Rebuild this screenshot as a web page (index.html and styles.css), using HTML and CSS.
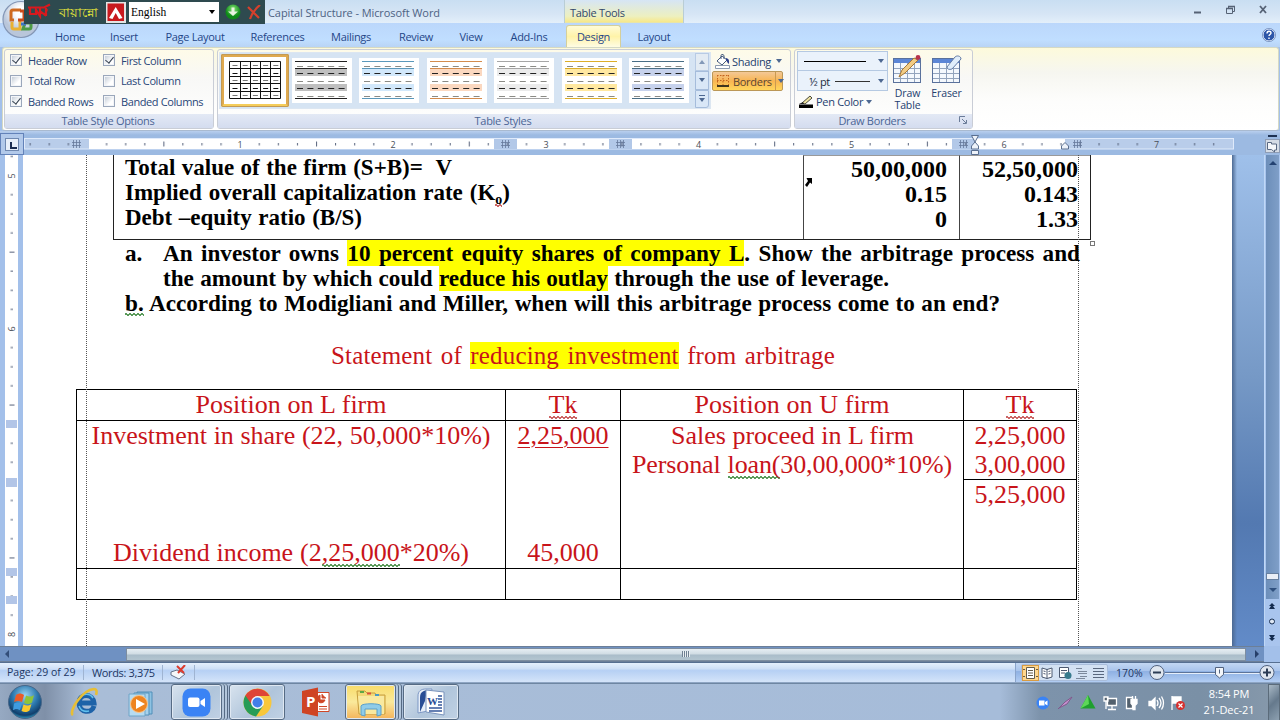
FILE: index.html
```html
<!DOCTYPE html>
<html lang="en">
<head>
<meta charset="utf-8">
<title>Capital Structure - Microsoft Word</title>
<link rel="stylesheet" href="styles.css">
</head>
<body>
<svg width="0" height="0" class="defs">
  <defs>
    <g id="dashes" fill="none" stroke-width="1.2" stroke-dasharray="6 4.4">
      <path d="M5 8.500H56M5 23.500H56M5 38.500H56" stroke="#8b8b86"/>
      <path d="M5 15.500H56M5 30.500H56" stroke="#222"/>
    </g>
    <radialGradient id="orb" cx=".5" cy=".3" r=".75"><stop offset="0" stop-color="#9ad4f2"/><stop offset=".5" stop-color="#2b78ae"/><stop offset=".8" stop-color="#123f6c"/><stop offset="1" stop-color="#38c5e8"/></radialGradient>
    <radialGradient id="office" cy=".3"><stop offset=".3" stop-color="#fff"/><stop offset="1" stop-color="#b9c6da"/></radialGradient>
    <radialGradient id="green" cy=".3"><stop offset="0" stop-color="#8be67a"/><stop offset="1" stop-color="#0d8b17"/></radialGradient>
    <g id="word-grid">
      <rect x=".5" y=".5" width="27" height="24" fill="#f4f8fd" stroke="#5a719c"/>
      <path d="M1 1h26v4H1z" fill="#5c86d6"/>
      <path d="M1 10.500h26M1 15.500h26M1 20.500h26M7.500 5v19M14.500 5v19M21.500 5v19" stroke="#93a4bd"/>
    </g>
    <g id="gridmark" stroke="#66799a"><path d="M1.500 0v8M4.500 0v8M7.500 0v8M0 2.500h9M0 5.500h9" stroke-width=".8"/></g>
  </defs>
</svg>
<div class="screen">
  <header class="titlebar">
    <svg class="orb" width="42" height="40" viewBox="0 0 42 40"><circle cx="20" cy="19.500" r="18" fill="url(#office)" stroke="#8497b6" stroke-width="1.200"/><g fill="none" stroke-width="3"><path d="M13 20h-3v-8q0-2 2-2h8" stroke="#cf6a20"/><path d="M11 22v5q0 2 2 2h6v-8" stroke="#e9b132"/><path d="M19 11h4v9h-6" stroke="#cc4b1c"/><path d="M22 29h6q2 0 2-2v-4h-6z" stroke="#4e9b45"/><path d="M20 24h5" stroke="#3f74c4"/></g></svg>
    <div class="bijoy">
      <svg class="scribble" width="26" height="18" viewBox="0 0 26 18" fill="none" stroke="#d8191e" stroke-width="2.200"><path d="M2 5.500h16l6-3M4 6v6h6V8l4 6V6M14 9l5 4 2-6M20 6v8"/></svg>
      <span class="bangla" lang="bn">বায়ান্নো</span>
      <svg width="20" height="21" viewBox="0 0 20 21"><rect x=".5" y=".5" width="18.500" height="19.500" fill="#c8191e" stroke="#e4e4e4" stroke-width="2"/><path d="M3 16L9.700 5 16.500 16l-3.500 1-3.300-6L6.500 17z" fill="#fff"/></svg>
      <div class="langbox"><span>English</span><i class="tri"></i></div>
      <svg class="go" width="16" height="16" viewBox="0 0 16 16"><circle cx="8" cy="8" r="7.500" fill="url(#green)"/><path d="M6.500 3.500h3v4H13L8 12 3 7.500h3.500z" fill="#e8f5df"/></svg>
      <svg width="14" height="15" viewBox="0 0 14 15" fill="none" stroke="#d6402c" stroke-width="2.200"><path d="M1 2l11 11M13 0C8 4 5 8 3 14"/></svg>
    </div>
    <span class="doc-name">Capital Structure - Microsoft Word</span>
    <div class="tools-title"><span>Table Tools</span></div>
    <svg class="winbtns" width="80" height="14" viewBox="0 0 80 14" fill="none" stroke="#566275"><path d="M2 9.500h7" stroke-width="2"/><path d="M34.500 5.500h6v5h-6zM36.500 5V3.500h6v5H41" /><path d="M34 5.500h7M36 3.500h7" stroke-width="1.400"/><path d="M68 3l6 7M74 3l-6 7" stroke-width="1.800"/></svg>
  </header>
  <nav class="tabs">
    <span class="w54">Home</span><span class="w54">Insert</span><span class="w88">Page Layout</span><span class="w77">References</span><span class="w70">Mailings</span><span class="w60">Review</span><span class="w50">View</span><span class="w66">Add-Ins</span><span class="active">Design</span><span class="w66">Layout</span>
    <svg class="help" width="14" height="14" viewBox="0 0 14 14"><circle cx="7" cy="7" r="6" fill="#2c56a8" stroke="#e8f0fc"/><circle cx="7" cy="7" r="6.600" fill="none" stroke="#6480b0" stroke-width=".7"/><path d="M5 5.500c0-3 4-3 4-.5C9 6.500 7 6.500 7 8M7 9.500v1.500" fill="none" stroke="#fff" stroke-width="1.400"/></svg>
  </nav>
  <section class="ribbon">
    <div class="group options">
      <div class="checks">
        <label class="on"><i></i>Header Row</label><label class="on"><i></i>First Column</label>
        <label><i></i>Total Row</label><label><i></i>Last Column</label>
        <label class="on"><i></i>Banded Rows</label><label><i></i>Banded Columns</label>
      </div>
      <div class="glabel">Table Style Options</div>
    </div>
    <div class="group styles">
      <div class="styles-body">
        <div class="gallery">
          <div class="chosen"><svg width="60" height="45" viewBox="0 0 60 45"><path d="M4.500 3.500h51v37h-51zM4 10.500h52M4 18.500h52M4 25.500h52M4 33.500h52M15.500 3v38M25.500 3v38M35.500 3v38M45.500 3v38" fill="none" stroke="#111"/><path d="M7.500 7.500H56M7.500 22.500H56M7.500 37.500H56" stroke="#777" stroke-dasharray="5 5.200"/><path d="M7.500 15.500H56M7.500 30.500H56" stroke="#111" stroke-dasharray="5 5.200"/></svg></div>
          <svg class="thumb k" viewBox="0 0 60 45"><path class="band" d="M3 11h52v7H3zM3 26h52v7H3z"/><path class="rule" d="M3 3.500h52M3 10.500h52M3 40.500h52"/><use href="#dashes"/></svg>
          <svg class="thumb b" viewBox="0 0 60 45"><path class="band" d="M3 11h52v7H3zM3 26h52v7H3z"/><path class="rule" d="M3 3.500h52M3 10.500h52M3 40.500h52"/><use href="#dashes"/></svg>
          <svg class="thumb o" viewBox="0 0 60 45"><path class="band" d="M3 11h52v7H3zM3 26h52v7H3z"/><path class="rule" d="M3 3.500h52M3 10.500h52M3 40.500h52"/><use href="#dashes"/></svg>
          <svg class="thumb g" viewBox="0 0 60 45"><path class="band" d="M3 11h52v7H3zM3 26h52v7H3z"/><path class="rule" d="M3 3.500h52M3 10.500h52M3 40.500h52"/><use href="#dashes"/></svg>
          <svg class="thumb y" viewBox="0 0 60 45"><path class="band" d="M3 11h52v7H3zM3 26h52v7H3z"/><path class="rule" d="M3 3.500h52M3 10.500h52M3 40.500h52"/><use href="#dashes"/></svg>
          <svg class="thumb n" viewBox="0 0 60 45"><path class="band" d="M3 11h52v7H3zM3 26h52v7H3z"/><path class="rule" d="M3 3.500h52M3 10.500h52M3 40.500h52"/><use href="#dashes"/></svg>
          <div class="scrollers"><b class="dim"><i class="up"></i></b><b><i class="dn"></i></b><b class="more"><i class="bar"></i><i class="dn"></i></b></div>
        </div>
        <div class="fills">
          <div class="shade"><svg width="16" height="15" viewBox="0 0 16 15"><path d="M2 7l5-5 5 4-5 5z" fill="#fff" stroke="#44597c"/><path d="M6 5V1.500C6 0 9 0 9 2v3" fill="none" stroke="#44597c"/><path d="M11 4c4 1 3 4 3 6-2-1-2-3-3-4z" fill="#2c3f8b"/><path d="M.5 11.500h14v3H.5z" fill="#fff" stroke="#8d9bb0"/></svg><span>Shading</span><i class="dn"></i></div>
          <div class="bord"><svg width="14" height="14" viewBox="0 0 14 14" fill="none"><path d="M1.500 1v10M7 1v10M12.500 1v10M1 1.500h12M1 6.500h12" stroke="#c4641e" stroke-dasharray="1.500 1.500"/><path d="M1 12h12" stroke="#111" stroke-width="1.600"/></svg><span>Borders</span><b><i class="dn"></i></b></div>
        </div>
      </div>
      <div class="glabel">Table Styles</div>
    </div>
    <div class="group draw">
      <div class="draw-body">
        <div class="pens">
          <div class="pick"><u class="long"></u><i class="dn"></i></div>
          <div class="pick second"><span>½ pt</span><u></u><i class="dn"></i></div>
          <div class="pencolor"><svg width="16" height="14" viewBox="0 0 16 14"><path d="M1 9.500h14V13H1z" fill="#000"/><path d="M4 8L12 1l2 2-7 6z" fill="#efe3a0" stroke="#4c4c40"/><path d="M1 9l4-2 1 2z" fill="#222"/></svg><span>Pen Color</span><i class="dn"></i></div>
        </div>
        <div class="tool"><svg width="31" height="30" viewBox="0 0 31 30"><use href="#word-grid" x="1" y="4"/><path d="M7 23l3-7L22 4l4 2-13 13z" fill="#f2cc85" stroke="#a77835"/><circle cx="26" cy="3.500" r="2.400" fill="#b8344b"/></svg><span>Draw<br>Table</span></div>
        <div class="tool"><svg width="31" height="30" viewBox="0 0 31 30"><use href="#word-grid" x="1" y="4"/><path d="M16 13L24 3c2-2 6-1 6 2l-9 10c-3 1-5 0-5-2z" fill="#e0edfa" stroke="#647ca5"/></svg><span>Eraser</span></div>
      </div>
      <div class="glabel shift">Draw Borders<svg class="launch" width="8" height="8" viewBox="0 0 8 8" fill="none" stroke="#6b7c99"><path d="M.5 6V.5H6M3 3l4 4M7.500 4v3.500H4"/></svg></div>
    </div>
  </section>

  <div class="hruler">
    <div class="tabstop"><span></span></div>
    <svg width="1256" height="22" viewBox="24 133 1256 22">
      <defs><pattern id="ht" x="87.500" y="139" width="152.700" height="10" patternUnits="userSpaceOnUse"><path d="M19.100 4v2.500M38.200 4v2.500M57.300 4v2.500M76.400 2.500v5M95.400 4v2.500M114.500 4v2.500M133.600 4v2.500" stroke="#55617a" stroke-width="1"/></pattern></defs>
      <rect x="24.500" y="138.500" width="1209" height="10.500" fill="#b9cdea" stroke="#dfeafb"/>
      <rect x="89" y="139" width="976" height="10" fill="#fff"/>
      <path d="M494 139h23v10h-23zM609 139h23v10h-23zM952 139h23v10h-23z" fill="#b2c8e8"/>
      <rect x="24" y="139" width="1205" height="10" fill="url(#ht)"/>
      <use href="#gridmark" x="72" y="140"/><use href="#gridmark" x="501" y="140"/><use href="#gridmark" x="616" y="140"/><use href="#gridmark" x="959" y="140"/><use href="#gridmark" x="1073" y="140"/>
      <g class="rnum"><text x="240" y="147.500">1</text><text x="393" y="147.500">2</text><text x="546" y="147.500">3</text><text x="698.500" y="147.500">4</text><text x="851.500" y="147.500">5</text><text x="1004" y="147.500">6</text><text x="1156.500" y="147.500">7</text></g>
      <g fill="#eef3fa" stroke="#5a6f90"><path d="M971.500 135.500h7l-3.500 6.500zM971.500 149v-3l3.500-4 3.500 4v3zM971.500 150.500h7v4h-7zM1061.500 149v-3l3.500-3.500 3.500 3.500v3z"/></g>
      <path d="M1268 136h9" stroke="#1d3152" stroke-width="2"/><rect x="1265.500" y="139.500" width="14" height="13" fill="#d5dce6" stroke="#8e9db5"/><path d="M1267.500 142.500h4v1.500h5v6h-2v2l-3-2.500h-4z" fill="#f5f7fa" stroke="#596982"/>
    </svg>
  </div>

  <main class="work">
    <svg class="vruler" width="23" height="491" viewBox="0 155 23 491">
      <defs><pattern id="vt" x="5" y="175.700" width="13" height="152.900" patternUnits="userSpaceOnUse"><path d="M5.500 19.100h2.500M5.500 38.200h2.500M5.500 57.300h2.500M4.500 76.400h5M5.500 95.500h2.500M5.500 114.600h2.500M5.500 133.700h2.500" stroke="#55617a"/></pattern></defs>
      <rect x="0" y="155" width="23" height="491" fill="#a3c0ea"/><rect x="5" y="155" width="13" height="491" fill="#fff"/>
      <rect x="5" y="155" width="13" height="491" fill="url(#vt)"/>
      <path d="M6 420h11v8H6zM6 478h11v9H6zM6 568h11v8H6zM6 596h11v8H6z" fill="#b2c5e7"/>
      <g class="rnum"><text transform="translate(14.500 176)rotate(-90)">5</text><text transform="translate(14.500 329)rotate(-90)">6</text><text transform="translate(14.500 634.500)rotate(-90)">8</text></g>
    </svg>
    <article class="page">
      <div class="guide left"></div><div class="guide right"></div>
      <div class="ratios">
        <div class="names"><p class="fit n1">Total value of the firm (S+B)=&nbsp; V</p><p class="fit n2">Implied overall capitalization rate (K<sub class="wr">o</sub>)</p><p class="fit n3">Debt –equity ratio (B/S)</p></div>
        <div class="vals"><p>50,00,000</p><p>0.15</p><p>0</p></div>
        <div class="vals last"><p>52,50,000</p><p>0.143</p><p>1.33</p></div>
        <i class="handle"></i>
      </div>
      <svg class="cursor" width="8" height="9" viewBox="0 0 8 9"><path d="M1.500 0H7v6L5 4.500 2 9 0 7l3-4z"/></svg>
      <div class="questions">
        <div class="q"><span class="let">a.</span><p class="fit q1">An investor owns <mark>10 percent equity shares of company L</mark>. Show the arbitrage process and</p></div>
        <div class="q"><span class="let"></span><p class="fit q2">the amount by which could <mark>reduce his outlay</mark> through the use of leverage.</p></div>
        <div class="q"><p class="fit q3"><span class="wg">b.</span> According to Modigliani and Miller, when will this arbitrage process come to an end?</p></div>
      </div>
      <h2 class="fit">Statement of <mark>reducing investment</mark> from arbitrage</h2>
      <div class="ledger">
        <div class="hd"><p class="fit l1">Position on L firm</p></div><div class="hd"><p><span class="wr">Tk</span></p></div><div class="hd"><p class="fit l4">Position on U firm</p></div><div class="hd"><p><span class="wr">Tk</span></p></div>
        <div class="bd"><p class="fit l2">Investment in share (22, 50,000*10%)</p><p class="fit l3">Dividend income (2<span class="wg">,25,000</span>*20%)</p></div>
        <div class="bd"><p><u>2,25,000</u></p><p>45,000</p></div>
        <div class="bd two"><p class="fit l5">Sales proceed in L firm</p><p class="fit l6">Personal <span class="wg">loan(</span>30,00,000*10%)</p></div>
        <div class="bd two tot"><p>2,25,000</p><p class="line">3,00,000</p><p>5,25,000</p></div>
        <div></div><div></div><div></div><div></div>
      </div>
    </article>
    <div class="desk"></div>
    <div class="vscroll">
      <div class="track"><i class="up"></i><b></b><i class="dn"></i></div>
      <svg width="15" height="46" viewBox="0 0 15 46" fill="#142c50"><path d="M7 4l3 3H8l2 3H4l2-3H4zM7 42l3-3H8l2-3H4l2 3H4z"/><circle cx="7" cy="22.500" r="2.500" fill="#dfe8f4" stroke="#142c50"/></svg>
    </div>
  </main>
  <div class="hscroll"><i class="lt"></i><div class="thumbbar"><span></span></div><i class="rt"></i></div>

  <footer class="status">
    <span class="pg">Page: 29 of 29</span><span class="wd">Words: 3,375</span>
    <span class="pf"><svg width="18" height="15" viewBox="0 0 18 15"><path d="M1 7l6-2 8 4-6 5-8-4z" fill="#f5f7fa" stroke="#65738a"/><path d="M7 1l7 7M15 0L8 8" stroke="#dc3a2d" stroke-width="2"/></svg></span>
    <div class="status-right">
      <div class="views">
        <svg class="cur" width="17" height="16" viewBox="0 0 17 16"><path d="M4.500 2.500h8v11h-8z" fill="#fff" stroke="#665d4a"/><path d="M6 5.500h5M6 8h5M6 10.500h5M1 4.500h2M1 11.500h2M14 4.500h2M14 11.500h2" stroke="#665d4a"/></svg>
        <svg width="17" height="16" viewBox="0 0 17 16"><path d="M3 3l5 1.500L13 3v9l-5 1.500L3 12zM8 4v9.500" fill="#fff" stroke="#4b5870"/><path d="M4.500 6l2 .5M4.500 8.500l2 .5M9.500 6.500l2-.5M9.500 9l2-.5" stroke="#4b5870"/></svg>
        <svg width="17" height="16" viewBox="0 0 17 16"><path d="M3.500 2.500h9v10h-9z" fill="#fff" stroke="#4b5870"/><path d="M5 5.500h6M5 8h4" stroke="#4b5870"/><circle cx="12" cy="10.500" r="3.500" fill="#367a8d"/></svg>
        <svg width="17" height="16" viewBox="0 0 17 16"><path d="M3 3.500h6M5 6.500h9M5 8.500h9M7 11.500h7M3 13.500h9" stroke="#7b889c"/></svg>
        <svg width="17" height="16" viewBox="0 0 17 16"><path d="M3 3.500h11M3 6.500h11M3 9.500h11M3 12.500h11" stroke="#59677e" stroke-width="1.100"/></svg>
      </div>
      <span class="pct">170%</span>
      <svg class="zoom" width="130" height="19" viewBox="0 0 130 19" fill="none"><path d="M16 9.500h102" stroke="#5d7499"/><path d="M16 10.500h102" stroke="#e6effb"/><g stroke="#51627f"><circle cx="8" cy="9.500" r="7" fill="#dfe6ef"/><circle cx="118" cy="9.500" r="7" fill="#dfe6ef"/><path d="M66.500 4.500h8v7l-4 3.500-4-3.500z" fill="#f3f6fa"/></g><path d="M4 9.500h8M114 9.500h8M118 5.500v8" stroke="#2c3c55" stroke-width="2"/><path d="M70.500 6.500v4" stroke="#51627f"/></svg>
    </div>
  </footer>

  <div class="taskbar">
    <svg class="start" width="36" height="36" viewBox="0 0 36 36"><circle cx="18" cy="18" r="16.500" fill="url(#orb)" stroke="#486789"/><path d="M9 11c3-2 5-2 8 0l-2 7c-3-1.500-5-1.500-8 0z" fill="#ea5a28"/><path d="M19 11.500c3 1.500 5 1.500 8-.5l-2 7.500c-3 2-5 2-8 .5z" fill="#8fc43a"/><path d="M7 19.500c3-1.500 5-1.500 8 0l-2 6.500c-3-1.500-4-1.500-7 0z" fill="#3f9be0"/><path d="M16.500 20.500c3 1.500 5 1.500 8-.5l-2 6.500c-3 2-5 2-8 .5z" fill="#f9c82d"/></svg>
    <svg class="ie" width="32" height="32" viewBox="0 0 32 32" fill="none"><path d="M25 20c-2 8-15 7-15-3s14-10 15 0H12" stroke="#1d62a8" stroke-width="5"/><path d="M24 12c-3-5-10-5-13 0M10 20c2 5 6 6 10 5" stroke="#5fc0ef" stroke-width="1.500"/><path d="M4 29C-1 26 13 4 25 3c3 0 3 3 2 6" stroke="#e7be35" stroke-width="2.600"/></svg>
    <svg class="wmp" width="28" height="28" viewBox="0 0 28 28"><path d="M9 3h15v22H9z" fill="#8ec2e2" stroke="#508fb9"/><path d="M6 4h15v22H6z" fill="#a7d2ec" stroke="#508fb9"/><path d="M1 5h16v22H1z" fill="#b6dbf1" stroke="#6fa4c6"/><circle cx="11" cy="15" r="8.500" fill="#ee8420" stroke="#f9c58b"/><path d="M8 10l9 5-9 5z" fill="#fff"/></svg>
    <div class="app zoomapp stack"><svg width="29" height="29" viewBox="0 0 29 29"><rect x=".5" y=".5" width="28" height="28" rx="8" fill="#3a83f5"/><rect x="6" y="9.500" width="11.500" height="9.500" rx="2" fill="#fff"/><path d="M18.500 13l4.500-3v9l-4.500-3z" fill="#fff"/></svg></div>
    <div class="app"><svg width="29" height="29" viewBox="0 0 29 29"><circle cx="14.500" cy="14.500" r="14" fill="#f8c73b"/><path d="M14.500 14.500L2.400 7.500A14 14 0 0 0 13 28.400L20 18z" fill="#279c56"/><path d="M2.400 7.500A14 14 0 0 1 26.600 8H14.500L9 17z" fill="#de4537"/><circle cx="14.500" cy="14.500" r="6.500" fill="#f4f7fa"/><circle cx="14.500" cy="14.500" r="5" fill="#437fe8"/></svg></div>
    <svg class="ppt" width="29" height="30" viewBox="0 0 29 30"><path d="M14 5.500h14v19H14z" fill="#fff" stroke="#cf4727"/><path d="M19 8a4 4 0 1 0 5 5h-5zM21 7v4h4M18 19.500h8M18 22h8" fill="#cf4727" stroke="#cf4727"/><path d="M1 4l16-3.500v29L1 26z" fill="#cf4424"/><text x="5" y="20" class="pp">P</text></svg>
    <div class="app files stack"><svg width="30" height="29" viewBox="0 0 30 29"><path d="M1 3h8l2 2h8l1 2h9v19H3z" fill="#f3d978" stroke="#c79d3e"/><path d="M2 8h26v18H4z" fill="#f9e9a0"/><path d="M4 4h4" stroke="#5ea846" stroke-width="2"/><path d="M11 5.500h4" stroke="#dc5039" stroke-width="2"/><path d="M19 7h4" stroke="#4b9ac2" stroke-width="2"/><path d="M5 27v-9c0-3 20-3 20 0v9l-4 1v-7H9v7z" fill="#8fcce9" stroke="#5ba0c9"/></svg></div>
    <div class="app"><svg width="31" height="30" viewBox="0 0 31 30"><path d="M2 26V9c0-5 3-7 8-7h6l-4 22z" fill="#e7eef8" stroke="#7d97c4"/><path d="M4 25V11c0-5 2-7 7-8L9 14z" fill="#294d95"/><path d="M10 3l18 2v23l-18-3z" fill="#fff" stroke="#7a94bd"/><path d="M22 9h4M22 12h4M22 15h4M22 18h4M13 21h13M13 24h13" stroke="#35579a" stroke-width="1.500"/><text x="11" y="18" class="ww">W</text></svg></div>
    <svg class="tray" width="160" height="24" viewBox="1030 691 160 24">
      <circle cx="1043" cy="703" r="6.500" fill="#3a83f5"/><path d="M1039 700.500h5.500v5H1039zM1045 702l2.500-1.500v5L1045 704z" fill="#fff"/>
      <path d="M1058 709l7-7 7-5-5 7-8 4" fill="#c592cf" stroke="#81588c"/>
      <path d="M1088 695l7.500 13.500h-15z" fill="#1fa02d"/><path d="M1088 695l1 9-8.500 4.500z" fill="#5dd758"/>
      <g fill="#53616e" stroke="#fff" stroke-width="1.300"><path d="M1107.500 698.500h9v7h-9zM1112 706v3M1108 709.500h8M1104 697h4v4h-4zM1106 701v8"/><path d="M1126.500 697.500h6v11h-6z"/><path d="M1131 699.500h6v4l-2 2v4h-2v-4l-2-2zM1132.500 696v3M1135.500 696v3" fill="#fff"/><path d="M1149 701.500h2.500l3.500-3.500v11l-3.500-3.500h-2.500z" fill="#fff"/><path d="M1157 700q2 3 0 6M1159 698q4 5 0 10M1161.500 696.500q4 6.500 0 13" fill="none"/><path d="M1172 696v14M1172 697h9v6h-9z" fill="#fff"/></g>
      <circle cx="1180.500" cy="705.500" r="4.500" fill="#d72f2d"/><path d="M1178.500 703.500l4 4M1182.500 703.500l-4 4" stroke="#fff" stroke-width="1.200"/>
    </svg>
    <div class="clock"><span>8:54 PM</span><span>21-Dec-21</span></div>
    <div class="peek"></div>
  </div>
</div>
</body>
</html>
```

FILE: styles.css
```css
* { box-sizing: border-box; }
body { margin: 0; }
p, h2 { margin: 0; font-weight: inherit; }
.defs { position: absolute; }
.screen { width: 1280px; height: 720px; overflow: hidden; display: flex; flex-direction: column; background: #a3c0ea; font-family: "Open Sans", "Noto Sans", sans-serif; font-size: 11px; color: #24406f; }
svg { flex: none; display: block; }
i.dn, i.up, i.tri { width: 0; height: 0; border: 3px solid transparent; border-top: 4px solid #4d6891; border-bottom: 0; flex: none; }
i.up { border-top: 0; border-bottom: 4px solid #4d6891; }

/* title bar */
.titlebar { height: 23px; display: flex; background: linear-gradient(#c9def2, #d6e5f5 60%, #e3effa); position: relative; flex: none; }
.orb { position: absolute; left: 1px; top: 0; z-index: 2; }
.bijoy { position: relative; z-index: 3; margin-left: 24px; width: 241px; height: 24px; background: #2e4a4f; display: flex; align-items: center; flex: none; }
.scribble { margin-left: 2px; margin-top: -2px; }
.bangla { width: 50px; text-align: center; color: #e8e83a; font-size: 13px; line-height: 20px; white-space: nowrap; margin-left: 1px; margin-right: 3px; }
.langbox { width: 90px; height: 20px; background: #fff; margin-left: 3px; padding: 0 4px 0 2px; display: flex; align-items: center; justify-content: space-between; font: 12px "Liberation Serif", serif; color: #000; }
.langbox span { font-size: 11.500px; }
i.tri { border-top-color: #000; }
.go { margin: 0 6px 0 6px; }
.doc-name { margin-left: 3px; width: 296px; line-height: 26px; color: #4d6283; letter-spacing: -.08px; white-space: nowrap; }
.tools-title { width: 120px; height: 36px; border: 1px solid #b9cdd5; border-width: 0 1px; background: linear-gradient(#d6e5f5 0, #edf0c0 45%, #f7e88b 61%, #bfdcfd 67%); padding-left: 5px; line-height: 26px; color: #33486b; flex: none; letter-spacing: -.3px; }
.winbtns { margin-left: auto; margin-right: 8px; margin-top: 3px; }

/* tabs */
.tabs { height: 24px; flex: none; background: linear-gradient(#bbd7fb, #c0deff 70%, #b9d4f5); display: flex; padding-left: 43px; line-height: 27px; text-align: center; color: #1f4688; position: relative; letter-spacing: -.3px; }
.tabs span { flex: none; white-space: nowrap; }
.w54 { width: 54px; } .w88 { width: 88px; } .w77 { width: 77px; } .w70 { width: 70px; } .w60 { width: 60px; } .w50 { width: 50px; } .w66 { width: 66px; }
.tabs .active { width: 55px; margin-left: 4px; margin-top: 2px; line-height: 21px; background: linear-gradient(#fffbd8, #fff3a8 50%, #fffce4); border: 1px solid #d5cf9b; border-bottom: 0; border-radius: 3px 3px 0 0; }
.help { margin-left: auto; margin-right: 4px; margin-top: 5px; }

/* ribbon */
.ribbon { height: 84px; flex: none; margin: 0 1px 0 2px; background: linear-gradient(#fdfadb, #f6f6f0 30%, #fdfdfc 65%, #fff); border: 1px solid #d5d9c4; border-bottom-color: #a9bad0; border-radius: 3px; padding: 1px 0 0 1px; display: flex; gap: 3px; letter-spacing: -.3px; }
.group { height: 80px; border: 1px solid #c9cdd6; border-radius: 3px; background: linear-gradient(#fefbe8, #f8f8f6 35%, #fff); display: flex; flex-direction: column; flex: none; }
.glabel { height: 14px; background: linear-gradient(#e3e9f5, #d4dcef); text-align: center; line-height: 14px; color: #4b6596; position: relative; padding-right: 2px; }
.glabel.shift { padding-right: 23px; }
.launch { position: absolute; right: 5px; top: 2px; }
.options { width: 210px; }
.checks { height: 64px; padding: 0 0 0 5px; display: grid; grid-template-columns: 93px 1fr; grid-template-rows: repeat(3, 20.500px); letter-spacing: -.4px; }
.checks label { display: flex; align-items: center; white-space: nowrap; color: #294678; }
.checks i { width: 12px; height: 12px; border: 1px solid #9aa7bb; background: linear-gradient(135deg, #bcc6d2, #fff 65%); box-shadow: inset 0 0 0 1px #f3f5f8; margin-right: 6px; position: relative; flex: none; }
.checks .on i::after { content: ""; position: absolute; left: 3px; top: 0; width: 4px; height: 7px; border: solid #34404f; border-width: 0 1.500px 1.500px 0; transform: rotate(38deg); }
.styles { width: 574px; }
.styles-body { height: 64px; display: flex; }
.gallery { margin: 2px 0 0 1px; width: 492px; height: 57px; background: #d6e4f3; border: 1px solid #dce6f1; display: flex; flex: none; }
.chosen { margin-left: 1px; margin-top: 1px; width: 68px; height: 53px; background: #fff; border: 3px solid #dfa94f; border-bottom-color: #f5cd5a; border-radius: 2px; outline: 1px solid #c29a55; outline-offset: -1px; flex: none; }
.chosen svg { margin: 1px 0 0 1px; }
.thumb { width: 60px; height: 45px; background: #fff; margin: 5px 0 0 7.400px; }
.chosen + .thumb { margin-left: 3px; }
.rule { fill: none; stroke: var(--r); } .band { fill: var(--b); }
.k { --r: #222; --b: #bfbfbf; } .b { --r: #5a98bb; --b: #d2e8fb; } .o { --r: #d38b4c; --b: #fbd8c0; } .g { --r: #a6a6a6; --b: #ebebeb; } .y { --r: #dcae28; --b: #ffe8a0; } .n { --r: #486d85; --b: #c7d2ec; }
.scrollers { margin-left: auto; width: 14px; display: flex; flex-direction: column; flex: none; margin-right: 1px; }
.scrollers b { flex: 1; border: 1px solid #a5bcdb; background: #d9e7f7; display: flex; flex-direction: column; align-items: center; justify-content: center; }
.scrollers .dim { background: #edf0f4; opacity: .6; }
.scrollers .more { border-bottom-right-radius: 3px; }
.bar { width: 6px; height: 1px; background: #4d6891; margin-bottom: 2px; }
.fills { padding: 1px 0 0 1px; }
.shade, .bord { display: flex; align-items: center; height: 20px; width: 71px; padding-left: 3px; white-space: nowrap; gap: 1px; flex: none; }
.shade i { margin-left: 4px; }
.bord { border: 1px solid #bb9757; border-radius: 2px; background: linear-gradient(#f3c896, #f8b552 50%, #ffd65c); color: #5a4632; gap: 3px; }
.bord b { border-left: 1px solid #ca9a50; height: 18px; display: flex; align-items: center; padding: 0 2px; margin-left: auto; }
.draw { width: 179px; }
.draw-body { height: 64px; display: flex; }
.pens { width: 93px; padding: 1px 0 0 2px; flex: none; }
.pick { height: 20px; border: 1px solid #b5c9e2; background: #eaf2fb; display: flex; align-items: center; justify-content: flex-end; padding-right: 3px; color: #222b3c; }
.pick.second { border-top: 0; padding-top: 1px; }
.pick u { width: 35px; height: 1px; background: #333; margin: 0 8px 0 5px; } .pick u.long { width: 62px; height: 1px; background: #000; margin: 0 12px 0 0; }
.pencolor { display: flex; align-items: center; height: 21px; gap: 3px; padding-left: 1px; white-space: nowrap; }
.pencolor svg { margin-right: -1px; }
.tool { width: 39px; padding-top: 4px; display: flex; flex-direction: column; align-items: center; text-align: center; line-height: 12px; font-size: 10.500px; letter-spacing: -.1px; }
.tool svg { margin-bottom: 3px; }

/* rulers */
.hruler { height: 24px; flex: none; display: flex; align-items: flex-end; background: linear-gradient(#b9cfee, #9cbae2 4px); }
.tabstop { width: 24px; height: 22px; border: 1px solid #6382b9; background: #b2c9ea; display: flex; align-items: center; justify-content: center; }
.tabstop span { width: 14px; height: 13px; border: 1px solid #7089b1; background: #e8eff9; position: relative; }
.tabstop span::after { content: ""; position: absolute; left: 4px; top: 3px; width: 5px; height: 5px; border: solid #1b2c50; border-width: 0 0 2px 2px; }
.rnum text { font: 9px "Open Sans", sans-serif; fill: #4a4f58; text-anchor: middle; }

/* document */
.work { height: 491px; flex: none; display: flex; }
.page { width: 1209px; flex: none; background: #fff; position: relative; font-family: "Liberation Serif", serif; overflow: hidden; color: #000; }
.guide { position: absolute; top: 0; bottom: 0; border-left: 1px dotted #555; z-index: 2; }
.guide.left { left: 63px; } .guide.right { left: 1055px; }
.fit { text-align: justify; text-align-last: justify; white-space: nowrap; }
mark { background: #ff0; color: inherit; display: inline; }
.wr, .wg { background: linear-gradient(45deg, transparent 38%, var(--w) 40% 60%, transparent 62%) 0 100% / 4px 3px repeat-x, linear-gradient(135deg, transparent 38%, var(--w) 40% 60%, transparent 62%) 2px 100% / 4px 3px repeat-x; }
.wr { --w: #c66; } .wg { --w: #5b9b5b; }
.ratios { margin-left: 90px; width: 978px; height: 85px; border: 1px solid #222; border-top: 0; display: grid; grid-template-columns: 689px 156px 1fr; font-weight: bold; font-size: 24px; position: relative; }
.names { padding: 0 0 0 11px; font-size: 23px; } .names p { line-height: 25px; height: 25px; }
.n1 { width: 327px; } .n2 { width: 385px; } .n3 { width: 237px; } .names sub { font-size: 14px; line-height: 0; vertical-align: -4px; }
.vals { border-left: 1px solid #444; border-top: 1px solid #999; text-align: right; padding: 1px 12px 0 0; } .vals p { height: 25px; line-height: 25px; } .vals.last { padding-right: 12px; }
.handle { position: absolute; right: -5px; bottom: -7px; width: 5px; height: 5px; border: 1px solid #777; background: #fff; }
.cursor { position: absolute; left: 782px; top: 23px; }
.questions { margin-left: 102px; font-weight: bold; font-size: 23.200px; }
.q { display: flex; height: 25.200px; line-height: 26px; } .let { width: 38px; }
.q1 { width: 917px; } .q2 { width: 726px; letter-spacing: -.02px; } .q3 { width: 875px; }
.page h2 { margin: 24px 0 0 308px; width: 504px; font-size: 25px; line-height: 31px; color: #c8141a; letter-spacing: .15px; }
.ledger { margin: 18px 0 0 53px; width: 1001px; display: grid; grid-template-columns: 429px 115px 343px 113px; grid-template-rows: 31px 148px 31px; border: 1px solid #000; border-width: 1px 0 0 1px; color: #c8141a; font-size: 26px; text-align: center; }
.ledger > div { border: 1px solid #000; border-width: 0 1px 1px 0; }
.ledger p { line-height: 30px; height: 30px; margin: 0 auto; }
.ledger .bd { display: flex; flex-direction: column; justify-content: space-between; } .ledger .two { justify-content: flex-start; }
.ledger .two p { height: 29px; } .ledger .tot p { width: 100%; } .ledger .tot .line { border-bottom: 1px solid #000; height: 30px; line-height: 29px; }
.ledger u { text-decoration-thickness: 1px; text-underline-offset: 3px; }
.ledger .l1 { width: 191px; } .ledger .l2 { width: 399px; } .ledger .l3 { width: 356px; } .ledger .l4 { width: 195px; } .ledger .l5 { width: 242px; } .ledger .l6 { width: 320px; letter-spacing: -.12px; }
.desk { width: 32px; background: linear-gradient(90deg, #4d6a93, transparent 5px), linear-gradient(#9fc0ea, #7699c6 45%, #5379b1 75%, #628bc8); }
.vscroll { width: 16px; border-left: 1px solid #c0d8f6; background: #a9c5ee; }
.track { margin: 0 1px; height: 444px; background: linear-gradient(90deg, #6c8eb9, #7f9fc8); display: flex; flex-direction: column; align-items: center; padding: 6px 0 7px; }
.track b { width: 13px; height: 7px; border: 1px solid #667f9f; background: #e9eef6; margin: auto 0 8px; }
.track i { border-top-color: #2f507f; border-bottom-color: #234271; border-left-width: 4px; border-right-width: 4px; }
.hscroll { height: 16px; flex: none; margin-right: 16px; background: #6f91c2; border: solid #6c7f98; border-width: 1px 0; display: flex; align-items: center; }
.lt, .rt { border: 4px solid transparent; border-right: 4px solid #334e79; border-left: 0; margin: 0 0 0 5px; flex: none; }
.rt { border: 4px solid transparent; border-left: 4px solid #263f69; border-right: 0; margin: 0 5px 0 auto; }
.thumbbar { margin-left: 117px; width: 1120px; height: 13px; background: linear-gradient(#e6eef3, #cfdbe3 48%, #a9bcc9 52%, #b3c5d0); border: 1px solid #7d8da0; display: flex; justify-content: center; align-items: center; }
.thumbbar span { width: 8px; height: 6px; background: repeating-linear-gradient(90deg, #6e8092 0 1px, #e8eef2 1px 2px); }

/* status bar */
.status { height: 21px; flex: none; background: linear-gradient(#e5f0fd, #cfe0f7 30%, #b6d0f4 40%, #d4e4f9); border-top: 1px solid #566f91; border-bottom: 1px solid #8ea5c3; display: flex; align-items: center; color: #1d3663; white-space: nowrap; }
.pg, .wd, .pf { border-right: 1px solid #9fb4d2; height: 15px; line-height: 15px; flex: none; }
.pg { width: 84px; padding-left: 7px; font-size: 10.500px; } .wd { width: 79px; padding-left: 8px; font-size: 11px; letter-spacing: -.35px; } .pf { width: 32px; padding-left: 7px; }
.status-right { margin-left: auto; height: 19px; display: flex; align-items: center; padding: 0 1px 0 5px; border-left: 1px solid #8aa4cb; background: linear-gradient(#c3d7f3, #a9c4ec 40%, #8fb1e3 45%, #b2cdf3); }
.views { display: flex; border: 1px solid #a9bddb; border-radius: 2px; background: #d3e1f3; height: 17px; width: 87px; flex: none; align-items: center; }
.views .cur { background: #ffd78e; box-shadow: inset 0 0 0 1px #d89b42; }
.pct { margin-left: 8px; width: 33px; font-size: 10.500px; flex: none; }

/* taskbar */
.taskbar { height: 38px; flex: none; display: flex; background: linear-gradient(90deg, #96a9c2 0, #7f90a8 45px, #a9bdd7 85px, #a6bcd9 1000px, #7d93ab 1040px, #7a90a6 1200px, #8799ab); border-top: 1px solid #6e86a2; }
.start { margin: 0 0 0 7px; } .ie { margin: 2px 0 0 26px; } .wmp { margin: 5px 0 0 27px; }
.app { width: 56px; height: 36px; border: 1px solid #566b84; border-radius: 3px; box-shadow: inset 0 0 0 1px #dfe8f2; background: linear-gradient(135deg, #d8e3ee, #b0c5db 55%, #c0d1e4); display: flex; align-items: center; justify-content: center; margin-left: 2px; flex: none; }
.zoomapp { margin-left: 15px; width: 51px; } .stack { box-shadow: inset 0 0 0 1px #dfe8f2, 2px 0 0 #b3c6db, 3px 0 0 #566b84, 5px 0 0 #b3c6db, 6px 0 0 #566b84; }
.stack + .app { margin-left: 7px; }
.ppt { margin: 3px 0 0 16px; } .files { width: 51px; margin-left: 15px; background: linear-gradient(#f9dc69, #fae99b 50%, #f4b45b); }
.pp { font: bold 15px "Open Sans", sans-serif; fill: #fff; } .ww { font: bold 11px "Liberation Serif", serif; fill: #294d95; }
.tray { margin: 7px 0 0 auto; }
.clock { width: 78px; display: flex; flex-direction: column; align-items: center; color: #fff; font-size: 11px; line-height: 16px; padding-top: 2px; white-space: nowrap; flex: none; letter-spacing: -.1px; }
.peek { width: 12px; border: 1px solid #5b6b7a; background: linear-gradient(135deg, #a8b8c5, #65798c 50%, #8da0b1); flex: none; }
```
